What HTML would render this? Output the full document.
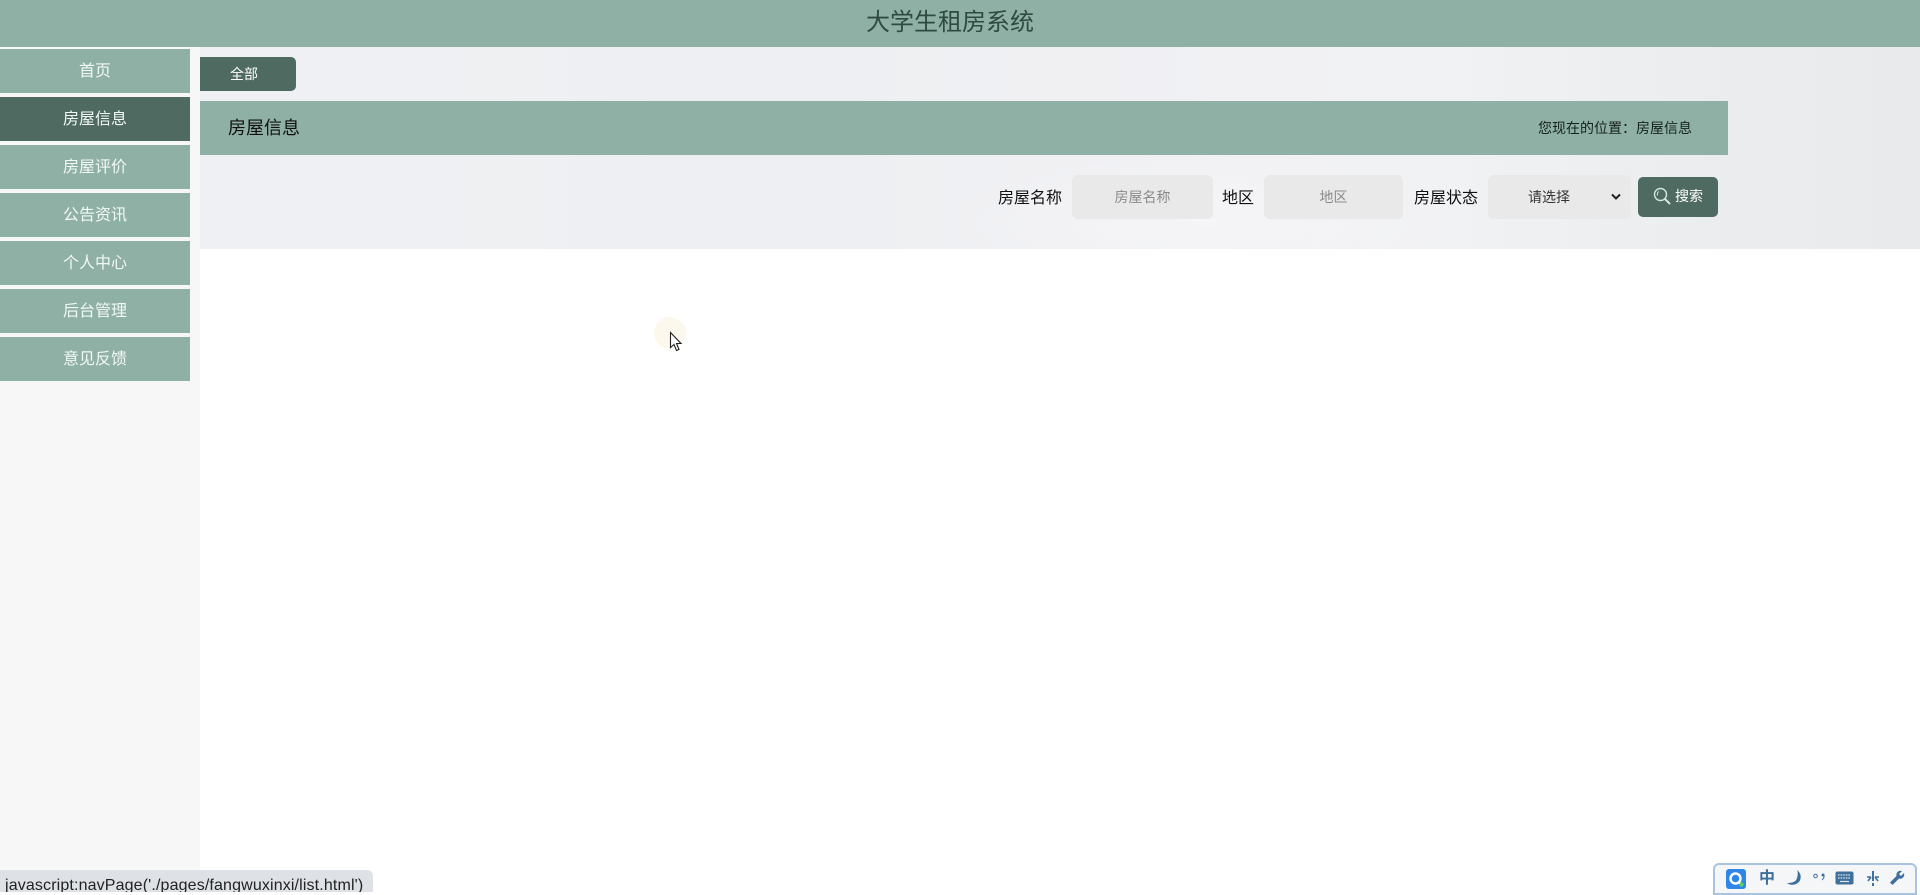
<!DOCTYPE html>
<html lang="zh-CN">
<head>
<meta charset="utf-8">
<title>大学生租房系统</title>
<style>
html,body{margin:0;padding:0;width:1920px;height:892px;overflow:hidden;background:#fff;font-family:"Liberation Sans","Noto Sans CJK SC",sans-serif;}
div,span{position:absolute;box-sizing:border-box;white-space:nowrap;}
.menu{left:0;width:190px;height:44px;background:#8fb0a5;color:#f2f8f5;font-size:16px;line-height:45px;text-align:center;}
.lab{font-size:16px;line-height:24px;color:#111;top:187px;}
.inp{top:175px;height:44px;background:#e9e9e9;border-radius:6px;font-size:14px;line-height:45px;text-align:center;color:#8a8a8a;}
</style>
</head>
<body>
<div style="left:0;top:0;width:1920px;height:47px;background:#8fb0a5;"></div>
<div style="left:866px;top:5px;font-size:24px;line-height:36px;color:#2f4a40;">大学生租房系统</div>

<div style="left:0;top:47px;width:200px;height:845px;background:#f7f7f7;"></div>
<div class="menu" style="top:49px;">首页</div>
<div class="menu" style="top:97px;background:#4f6b61;">房屋信息</div>
<div class="menu" style="top:145px;">房屋评价</div>
<div class="menu" style="top:193px;">公告资讯</div>
<div class="menu" style="top:241px;">个人中心</div>
<div class="menu" style="top:289px;">后台管理</div>
<div class="menu" style="top:337px;">意见反馈</div>

<div style="left:200px;top:47px;width:1720px;height:202px;background:
radial-gradient(ellipse 260px 70px at 1000px 175px,#f5f5f7 0%,rgba(245,245,247,0) 100%),
linear-gradient(90deg,#eff0f3 0%,#eeeff2 35%,#f1f1f4 62%,#f1f2f4 72%,#ebedef 86%,#e8eaec 100%);"></div>

<div style="left:200px;top:57px;width:96px;height:34px;background:#4f6b61;border-radius:0 5px 5px 0;"></div>
<div style="left:230px;top:63px;font-size:14px;line-height:22px;color:#fff;">全部</div>

<div style="left:200px;top:101px;width:1528px;height:54px;background:#8fb0a5;"></div>
<div style="left:228px;top:115px;font-size:18px;line-height:27px;color:#111;">房屋信息</div>
<div style="left:1538px;top:118px;font-size:14px;line-height:21px;color:#16221e;">您现在的位置：房屋信息</div>

<div class="lab" style="left:998px;">房屋名称</div>
<div class="inp" style="left:1072px;width:141px;">房屋名称</div>
<div class="lab" style="left:1222px;">地区</div>
<div class="inp" style="left:1264px;width:139px;">地区</div>
<div class="lab" style="left:1414px;">房屋状态</div>
<div class="inp" style="left:1488px;width:143px;"></div>
<div style="left:1528px;top:187px;font-size:14px;line-height:21px;color:#333;">请选择</div>
<svg style="position:absolute;left:1610px;top:192px;" width="12" height="10" viewBox="0 0 12 10"><path d="M2 2.5L6 6.5L10 2.5" fill="none" stroke="#222" stroke-width="2"/></svg>

<div style="left:1638px;top:177px;width:80px;height:40px;background:#4f6b61;border-radius:5px;"></div>
<svg style="position:absolute;left:1653px;top:187px;" width="18" height="18" viewBox="0 0 18 18"><circle cx="7.5" cy="7.5" r="6" fill="none" stroke="#d3e6de" stroke-width="1.4"/><path d="M12 12L16.5 16.5" stroke="#d3e6de" stroke-width="2" stroke-linecap="round"/><path d="M4.5 8.5A3.5 3.5 0 0 1 6 4.5" fill="none" stroke="#d3e6de" stroke-width="1"/></svg>
<div style="left:1675px;top:186px;font-size:14px;line-height:21px;color:#fff;">搜索</div>

<div style="left:654px;top:317px;width:32px;height:32px;border-radius:50%;background:#fdf8ee;"></div>
<svg style="position:absolute;left:669px;top:331px;" width="14" height="22" viewBox="0 0 14 22"><path d="M1.5 1.5V16.5L5 13.5L7.5 19.5L10 18.5L7.5 12.5H12Z" fill="#fff" stroke="#222" stroke-width="1.1" stroke-linejoin="miter"/></svg>

<div style="left:0;top:870px;width:373px;height:22px;background:#dee1e6;border-radius:0 6px 0 0;overflow:hidden;">
<span style="left:5px;top:5px;font-size:16px;line-height:22px;color:#222;letter-spacing:.14px;">javascript:navPage('./pages/fangwuxinxi/list.html')</span>
</div>

<div style="left:1713px;top:863px;width:204px;height:32px;background:#f4f6f8;border:2px solid #a9c4e0;border-radius:6px 6px 0 0;"></div>
<div style="left:1726px;top:869px;width:20px;height:20px;background:#2f86e6;border-radius:3px;"></div>
<svg style="position:absolute;left:1726px;top:869px;" width="20" height="20" viewBox="0 0 20 20"><circle cx="9.5" cy="9.5" r="5" fill="none" stroke="#fff" stroke-width="2.4"/><path d="M12.5 13L15 15.5" stroke="#fff" stroke-width="2"/><circle cx="15.5" cy="15.5" r="2.2" fill="#5ccf6a"/></svg>
<div style="left:1759px;top:867px;font-size:16px;line-height:24px;font-weight:700;color:#3f6f9c;">中</div>
<svg style="position:absolute;left:1786px;top:869px;" width="18" height="18" viewBox="0 0 18 18"><path d="M11 1C15 4 16 9 13 13C10 16 5 17 1 14C6 14 10 13 11 9C12 6 12 3 11 1Z" fill="#3f6f9c"/></svg>
<svg style="position:absolute;left:1812px;top:872px;" width="14" height="12" viewBox="0 0 14 12"><circle cx="3.5" cy="4" r="1.8" fill="none" stroke="#3f6f9c" stroke-width="1"/><circle cx="11" cy="3" r="1.5" fill="#3f6f9c"/><path d="M12 3Q12.5 6 10 8" fill="none" stroke="#3f6f9c" stroke-width="1"/></svg>
<svg style="position:absolute;left:1835px;top:871px;" width="19" height="14" viewBox="0 0 19 14"><rect x=".5" y=".5" width="18" height="13" rx="2" fill="#3f6f9c"/><path d="M3 4H16M3 7H16" stroke="#dfe8f1" stroke-width="1.2" stroke-dasharray="1.6 1"/><path d="M5 10.5H14" stroke="#dfe8f1" stroke-width="1.2"/></svg>
<svg style="position:absolute;left:1866px;top:870px;" width="14" height="18" viewBox="0 0 14 18"><path d="M7 1V16" stroke="#3f6f9c" stroke-width="2" stroke-dasharray="10 2 3"/><path d="M1 7H5M9 7H13M5 7L2 11M9 7L12 11" fill="none" stroke="#3f6f9c" stroke-width="1.6"/></svg>
<svg style="position:absolute;left:1889px;top:870px;" width="16" height="16" viewBox="0 0 16 16"><path d="M15 3L12 6L10 4L13 1C10 0 7 2 7.5 6L1 12.5L3.5 15L10 8.5C13 9.5 16 7 15 3Z" fill="#3f6f9c"/></svg>
</body>
</html>
